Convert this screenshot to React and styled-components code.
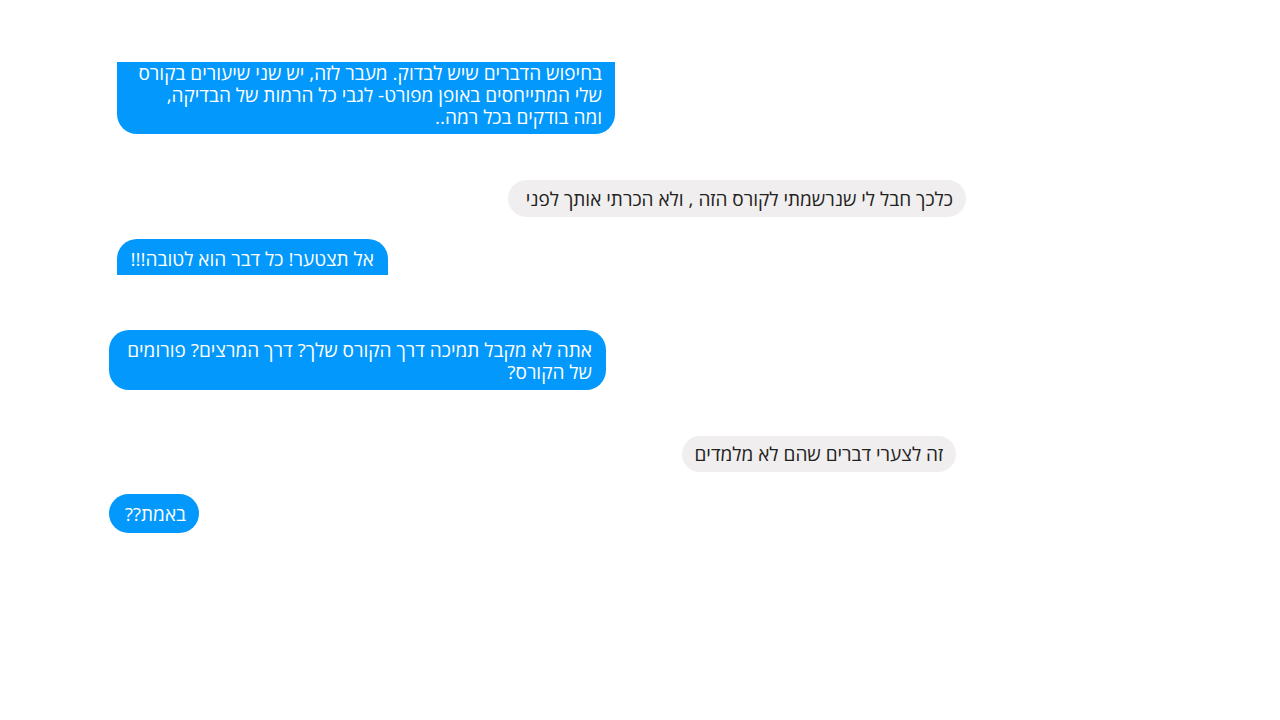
import React from 'react'
import styled, { createGlobalStyle } from 'styled-components'

const GlobalStyle = createGlobalStyle`
    html, body {
        margin: 0;
        padding: 0;
        background: #ffffff;
    }
`

const messages = [
    {
        id: 1,
        mine: false,
        left: 117,
        top: 62,
        width: 498,
        cut: 'top',
        pad: '0 13px 6px 13px',
        lines: [
            'בחיפוש הדברים שיש לבדוק. מעבר לזה, יש שני שיעורים בקורס',
            'שלי המתייחסים באופן מפורט- לגבי כל הרמות של הבדיקה,',
            'ומה בודקים בכל רמה..',
        ],
    },
    {
        id: 2,
        mine: true,
        left: 508,
        top: 46,
        width: 458,
        pad: '8px 13px 7px 13px',
        lines: ['כלכך חבל לי שנרשמתי לקורס הזה , ולא הכרתי אותך לפני'],
    },
    {
        id: 3,
        mine: false,
        left: 117,
        top: 22,
        width: 271,
        cut: 'bottom',
        pad: '9px 14px 5px 14px',
        lines: ['אל תצטער! כל דבר הוא לטובה!!!'],
    },
    {
        id: 4,
        mine: false,
        left: 109,
        top: 55,
        width: 497,
        pad: '9px 14px 7px 14px',
        lines: ['אתה לא מקבל תמיכה דרך הקורס שלך? דרך המרצים? פורומים', 'של הקורס?'],
    },
    {
        id: 5,
        mine: true,
        left: 682,
        top: 46,
        width: 274,
        pad: '7px 13px 7px 13px',
        lines: ['זה לצערי דברים שהם לא מלמדים'],
    },
    {
        id: 6,
        mine: false,
        left: 109,
        top: 22,
        width: 90,
        pad: '9px 13px 8px 13px',
        lines: ['באמת??'],
    },
]

function App() {
    return (
        <>
            <GlobalStyle />
            <Slide>
                <Thread>
                    {messages.map(m => (
                        <Bubble
                            key={m.id}
                            $mine={m.mine}
                            $left={m.left}
                            $top={m.top}
                            $width={m.width}
                            $cut={m.cut}
                            $pad={m.pad}
                        >
                            {m.lines.map((line, i) => (
                                <Line key={i}>{line}</Line>
                            ))}
                        </Bubble>
                    ))}
                </Thread>
            </Slide>
        </>
    )
}

export default App

const Slide = styled.div`
    width: 1280px;
    height: 720px;
    background: #ffffff;
    overflow: hidden;
`

const Thread = styled.div`
    display: flex;
    flex-direction: column;
    align-items: flex-start;
`

const Bubble = styled.div`
    box-sizing: border-box;
    direction: rtl;
    text-align: right;
    width: ${p => p.$width}px;
    margin-left: ${p => p.$left}px;
    margin-top: ${p => p.$top}px;
    padding: ${p => p.$pad};
    background: ${p => (p.$mine ? '#f0eeee' : '#0398fb')};
    color: ${p => (p.$mine ? '#222222' : '#ffffff')};
    border-radius: ${p =>
        p.$cut === 'top' ? '0 0 20px 20px' :
        p.$cut === 'bottom' ? '20px 20px 0 0' : '20px'};
    font-family: "Open Sans", "Liberation Sans", "DejaVu Sans", sans-serif;
    font-size: 19px;
    line-height: 22px;
`

const Line = styled.div`
    white-space: nowrap;
`
